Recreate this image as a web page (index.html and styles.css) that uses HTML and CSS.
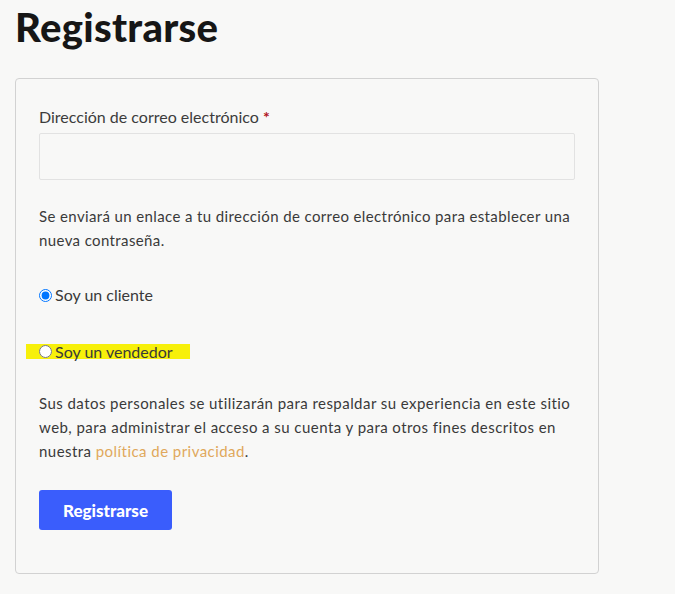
FILE: index.html
```html
<!DOCTYPE html>
<html lang="es">
<head>
<meta charset="utf-8">
<link rel="stylesheet" href="styles.css">
</head>
<body>
<main class="page">
  <h1 class="title">Registrarse</h1>
  <form class="card">
    <label class="label" for="email">Dirección de correo electrónico <span class="req">*</span></label>
    <input class="input" id="email" type="email">
    <p class="note">Se enviará un enlace a tu dirección de correo electrónico para establecer una nueva contraseña.</p>
    <label class="radio"><input type="radio" name="role" checked> Soy un cliente</label>
    <label class="radio marked"><input type="radio" name="role"> Soy un vendedor</label>
    <p class="note privacy">Sus datos personales se utilizarán para respaldar su experiencia en este sitio web, para administrar el acceso a su cuenta y para otros fines descritos en nuestra <a class="link" href="#">política de privacidad</a>.</p>
    <button class="btn" type="button">Registrarse</button>
  </form>
</main>
</body>
</html>
```
FILE: styles.css
```css
html, body { margin: 0; padding: 0; background: #f8f8f7; }
body { font-family: "Lato", "Noto Sans", sans-serif; color: #3a3a3a; }
.page { padding: 0 0 0 15px; width: 584px; }
.title { margin: 0; padding-top: 4px; font-size: 40px; font-weight: 900; color: #161616; line-height: 46px; letter-spacing: 0.3px; }
.card { margin-top: 28px; border: 1px solid #d2d2d2; border-radius: 4px; padding: 27px 23px 43px 23px; display: flex; flex-direction: column; align-items: flex-start; }
.label { font-size: 16px; line-height: 22px; color: #3c3c3c; }
.req { color: #b0121b; font-weight: 700; }
.input { margin-top: 5px; width: 536px; height: 47px; box-sizing: border-box; border: 1px solid #e2e2e2; border-radius: 2px; background: #f8f8f7; }
.note { margin: 24px 0 0; font-size: 15px; line-height: 24px; color: #3a3a3a; letter-spacing: 0.38px; }
.radio { margin-top: 32px; font-size: 16px; line-height: 22px; display: flex; align-items: center; gap: 3px; }
.radio input { margin: 0; width: 13px; height: 13px; }
.radio + .radio { margin-top: 38px; }
.marked { background: #f7f00a; margin-left: -13px; padding-left: 13px; padding-right: 17px; line-height: 15px; }
.privacy { margin-top: 32px; letter-spacing: 0.45px; }
.link { color: #e0a85c; text-decoration: none; }
.btn { margin-top: 27px; width: 133px; height: 40px; border: 0; border-radius: 3px; background: #3a5dfc; color: #fff; font-family: inherit; font-size: 17px; font-weight: 900; }
```
